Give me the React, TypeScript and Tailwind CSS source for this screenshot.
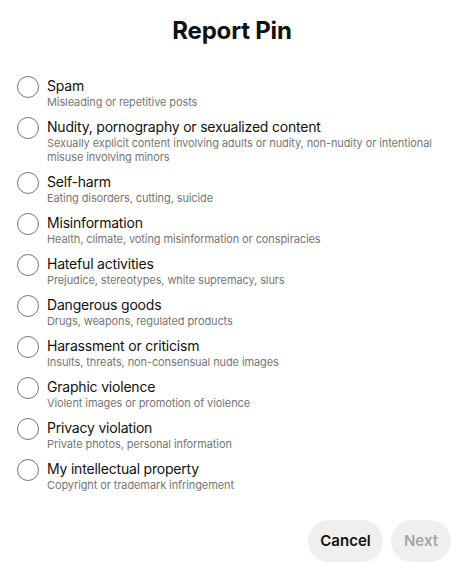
import React from "react";

const items: { label: string; desc: string }[] = [
  { label: "Spam", desc: "Misleading or repetitive posts" },
  {
    label: "Nudity, pornography or sexualized content",
    desc: "Sexually explicit content involving adults or nudity, non-nudity or intentional misuse involving minors",
  },
  { label: "Self-harm", desc: "Eating disorders, cutting, suicide" },
  { label: "Misinformation", desc: "Health, climate, voting misinformation or conspiracies" },
  { label: "Hateful activities", desc: "Prejudice, stereotypes, white supremacy, slurs" },
  { label: "Dangerous goods", desc: "Drugs, weapons, regulated products" },
  { label: "Harassment or criticism", desc: "Insults, threats, non-consensual nude images" },
  { label: "Graphic violence", desc: "Violent images or promotion of violence" },
  { label: "Privacy violation", desc: "Private photos, personal information" },
  { label: "My intellectual property", desc: "Copyright or trademark infringement" },
];

export default function App() {
  return (
    <div
      className="w-[467px] h-[573px] bg-white flex flex-col text-[#111111]"
      style={{ fontFamily: "Inter, 'Noto Sans', sans-serif" }}
    >
      <h1 className="pt-[15px] pr-[3px] text-center text-[24px] leading-[32px] font-bold tracking-[-0.2px]">
        Report Pin
      </h1>
      <div className="mt-[30px] px-[17px] flex flex-col gap-[9px]">
        {items.map((it) => (
          <div key={it.label} className="flex items-start gap-[8px]">
            <div className="mt-[-1px] w-[22px] h-[22px] shrink-0 rounded-full border-[1.5px] border-[#767676]" />
            <div className="flex flex-col w-[395px]">
              <div className="text-[14px] leading-[18px] tracking-[-0.2px]">{it.label}</div>
              <div className="text-[11px] leading-[14px] tracking-[-0.1px] text-[#767676]">{it.desc}</div>
            </div>
          </div>
        ))}
      </div>
      <div className="mt-auto pb-[11px] pr-[16px] flex justify-end gap-[8px]">
        <button className="h-[42px] w-[75px] rounded-full bg-[#efefef] text-[15px] font-semibold text-[#111111]">
          Cancel
        </button>
        <button className="h-[42px] w-[60px] rounded-full bg-[#efefef] text-[15px] font-semibold text-[#a5a5a5]">
          Next
        </button>
      </div>
    </div>
  );
}
